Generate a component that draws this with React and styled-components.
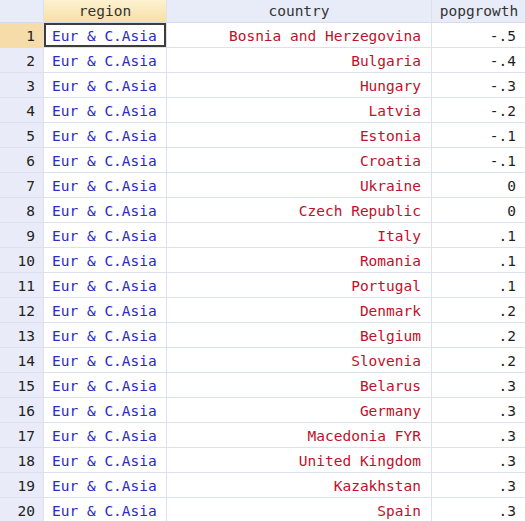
import React from "react";
import styled, { createGlobalStyle } from "styled-components";

const Global = createGlobalStyle`
  html, body { margin: 0; padding: 0; background: #ffffff; }
  body { overflow: hidden; }
`;

const rows = [
  ["Bosnia and Herzegovina", "-.5"],
  ["Bulgaria", "-.4"],
  ["Hungary", "-.3"],
  ["Latvia", "-.2"],
  ["Estonia", "-.1"],
  ["Croatia", "-.1"],
  ["Ukraine", "0"],
  ["Czech Republic", "0"],
  ["Italy", ".1"],
  ["Romania", ".1"],
  ["Portugal", ".1"],
  ["Denmark", ".2"],
  ["Belgium", ".2"],
  ["Slovenia", ".2"],
  ["Belarus", ".3"],
  ["Germany", ".3"],
  ["Macedonia FYR", ".3"],
  ["United Kingdom", ".3"],
  ["Kazakhstan", ".3"],
  ["Spain", ".3"],
];

const Grid = styled.div`
  display: grid;
  grid-template-columns: 44px 123px 265px 95px;
  grid-auto-rows: 25px;
  grid-template-rows: 23px;
  width: 527px;
  font-family: "DejaVu Sans Mono", "Liberation Mono", monospace;
  font-size: 14.5px;
  background: #ffffff;
`;

const Cell = styled.div`
  box-sizing: border-box;
  border-right: 1px solid #dde1ee;
  border-bottom: 1px solid #dde1ee;
  display: flex;
  align-items: center;
  white-space: nowrap;
  overflow: hidden;
  padding: 2px 9px 0 8px;
`;

const HeadCell = styled(Cell)`
  justify-content: center;
  color: #333333;
  padding: 0 4px;
  background: ${(p) =>
    p.$active
      ? "linear-gradient(#fdf1d0, #f7e0a6)"
      : "#e8ecf8"};
  border-bottom-color: #d6dbea;
`;

const RowNum = styled(Cell)`
  justify-content: flex-end;
  padding-right: 8px;
  color: #222222;
  background: ${(p) => (p.$active ? "#f5dca9" : "#e9ecf8")};
  border-bottom-color: ${(p) => (p.$active ? "#f5dca9" : "#dde1ee")};
`;

const TextCell = styled(Cell)`
  justify-content: ${(p) => (p.$right ? "flex-end" : "flex-start")};
  color: ${(p) => p.$color};
  padding-right: ${(p) => (p.$right ? "10px" : "9px")};
  box-shadow: ${(p) => (p.$selected ? "inset 0 0 0 2px #3d3d3d" : "none")};
`;

export default function App() {
  return (
    <>
      <Global />
      <Grid>
        <HeadCell />
        <HeadCell $active>region</HeadCell>
        <HeadCell>country</HeadCell>
        <HeadCell>popgrowth</HeadCell>
        {rows.map(([country, pg], i) => (
          <React.Fragment key={i}>
            <RowNum $active={i === 0}>{i + 1}</RowNum>
            <TextCell $color="#2b2bc6" $selected={i === 0}>
              Eur &amp; C.Asia
            </TextCell>
            <TextCell $color="#c0102a" $right>
              {country}
            </TextCell>
            <TextCell $color="#1e1e1e" $right>
              {pg}
            </TextCell>
          </React.Fragment>
        ))}
      </Grid>
    </>
  );
}
